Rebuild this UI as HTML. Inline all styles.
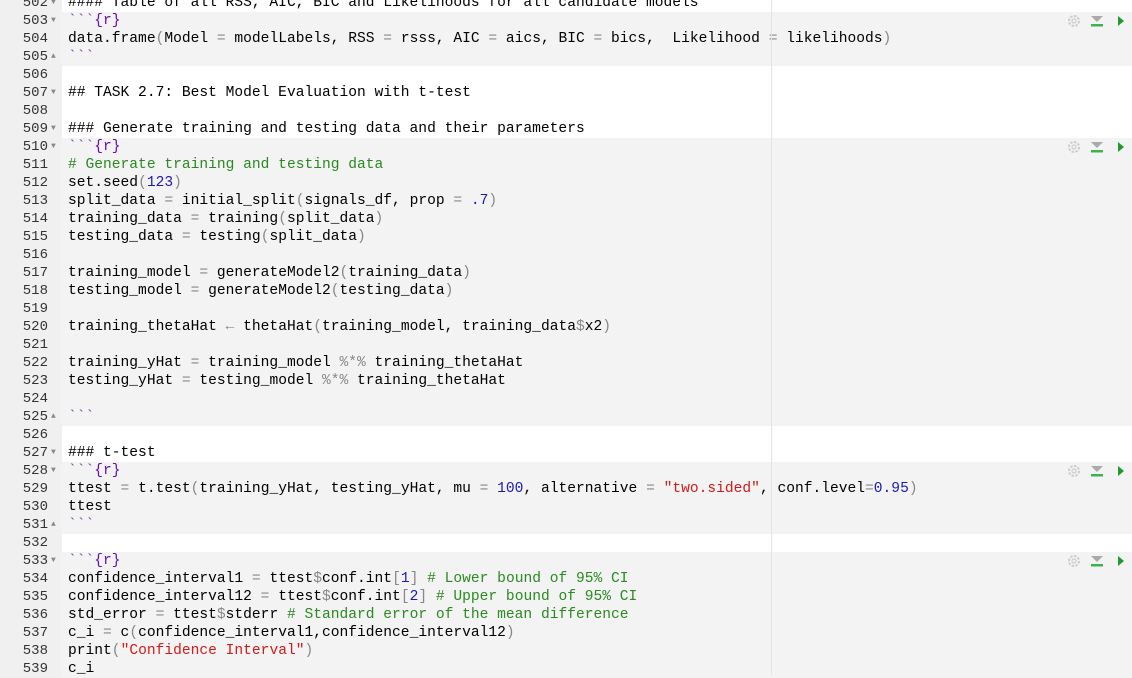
<!DOCTYPE html>
<html><head><style>
body{margin:0;width:1132px;height:675px;overflow:hidden;background:#fff;font-family:"Liberation Mono",monospace;font-size:14.6px;position:relative}
.g{position:absolute;left:0;top:0;width:62px;height:675px;background:#f0f0f0;}
#w{position:absolute;left:0;top:-6px;width:1132px}
.l{position:relative;height:18px;line-height:18px;white-space:pre;padding-left:68px;color:#000}
.l.c{background:linear-gradient(to right,#f0f0f0 62px,#f3f3f3 62px)}
.l b{font-weight:normal;position:absolute;left:0;width:48px;text-align:right;color:#333;font-size:14px}
.l i{font-style:normal;position:absolute;left:51px;color:#888;font-size:8px}
.p{color:#888}.n{color:#1a1ab8}.s{color:#d21a1a}.cm{color:#2a8a20}.r{color:#6a0dad}.bt{color:#7a3aa8}
.vl{position:absolute;left:771px;top:0;width:1px;height:675px;background:#e3e3e3}
.ic{position:absolute;left:1066px;width:66px;height:18px}
</style></head><body>
<div class="g"></div>
<div id="w">
<div class="l"><b>502</b><i>&#9660;</i>#### Table of all RSS, AIC, BIC and Likelihoods for all candidate models</div>
<div class="l c"><b>503</b><i>&#9660;</i><span class="bt">&#96;&#96;&#96;</span><span class="r">{r}</span></div>
<div class="l c"><b>504</b>data.frame<span class="p">(</span>Model <span class="p">=</span> modelLabels, RSS <span class="p">=</span> rsss, AIC <span class="p">=</span> aics, BIC <span class="p">=</span> bics,  Likelihood <span class="p">=</span> likelihoods<span class="p">)</span></div>
<div class="l c"><b>505</b><i>&#9650;</i><span class="bt">&#96;&#96;&#96;</span></div>
<div class="l"><b>506</b></div>
<div class="l"><b>507</b><i>&#9660;</i>## TASK 2.7: Best Model Evaluation with t-test</div>
<div class="l"><b>508</b></div>
<div class="l"><b>509</b><i>&#9660;</i>### Generate training and testing data and their parameters</div>
<div class="l c"><b>510</b><i>&#9660;</i><span class="bt">&#96;&#96;&#96;</span><span class="r">{r}</span></div>
<div class="l c"><b>511</b><span class="cm"># Generate training and testing data</span></div>
<div class="l c"><b>512</b>set.seed<span class="p">(</span><span class="n">123</span><span class="p">)</span></div>
<div class="l c"><b>513</b>split_data <span class="p">=</span> initial_split<span class="p">(</span>signals_df, prop <span class="p">=</span> <span class="n">.7</span><span class="p">)</span></div>
<div class="l c"><b>514</b>training_data <span class="p">=</span> training<span class="p">(</span>split_data<span class="p">)</span></div>
<div class="l c"><b>515</b>testing_data <span class="p">=</span> testing<span class="p">(</span>split_data<span class="p">)</span></div>
<div class="l c"><b>516</b></div>
<div class="l c"><b>517</b>training_model <span class="p">=</span> generateModel2<span class="p">(</span>training_data<span class="p">)</span></div>
<div class="l c"><b>518</b>testing_model <span class="p">=</span> generateModel2<span class="p">(</span>testing_data<span class="p">)</span></div>
<div class="l c"><b>519</b></div>
<div class="l c"><b>520</b>training_thetaHat <span class="p">&larr;</span> thetaHat<span class="p">(</span>training_model, training_data<span class="p">$</span>x2<span class="p">)</span></div>
<div class="l c"><b>521</b></div>
<div class="l c"><b>522</b>training_yHat <span class="p">=</span> training_model <span class="p">%*%</span> training_thetaHat</div>
<div class="l c"><b>523</b>testing_yHat <span class="p">=</span> testing_model <span class="p">%*%</span> training_thetaHat</div>
<div class="l c"><b>524</b></div>
<div class="l c"><b>525</b><i>&#9650;</i><span class="bt">&#96;&#96;&#96;</span></div>
<div class="l"><b>526</b></div>
<div class="l"><b>527</b><i>&#9660;</i>### t-test</div>
<div class="l c"><b>528</b><i>&#9660;</i><span class="bt">&#96;&#96;&#96;</span><span class="r">{r}</span></div>
<div class="l c"><b>529</b>ttest <span class="p">=</span> t.test<span class="p">(</span>training_yHat, testing_yHat, mu <span class="p">=</span> <span class="n">100</span>, alternative <span class="p">=</span> <span class="s">"two.sided"</span>, conf.level<span class="p">=</span><span class="n">0.95</span><span class="p">)</span></div>
<div class="l c"><b>530</b>ttest</div>
<div class="l c"><b>531</b><i>&#9650;</i><span class="bt">&#96;&#96;&#96;</span></div>
<div class="l"><b>532</b></div>
<div class="l c"><b>533</b><i>&#9660;</i><span class="bt">&#96;&#96;&#96;</span><span class="r">{r}</span></div>
<div class="l c"><b>534</b>confidence_interval1 <span class="p">=</span> ttest<span class="p">$</span>conf.int<span class="p">[</span><span class="n">1</span><span class="p">]</span> <span class="cm"># Lower bound of 95% CI</span></div>
<div class="l c"><b>535</b>confidence_interval12 <span class="p">=</span> ttest<span class="p">$</span>conf.int<span class="p">[</span><span class="n">2</span><span class="p">]</span> <span class="cm"># Upper bound of 95% CI</span></div>
<div class="l c"><b>536</b>std_error <span class="p">=</span> ttest<span class="p">$</span>stderr <span class="cm"># Standard error of the mean difference</span></div>
<div class="l c"><b>537</b>c_i <span class="p">=</span> c<span class="p">(</span>confidence_interval1,confidence_interval12<span class="p">)</span></div>
<div class="l c"><b>538</b>print<span class="p">(</span><span class="s">"Confidence Interval"</span><span class="p">)</span></div>
<div class="l c"><b>539</b>c_i</div>
</div>
<div class="vl"></div>
<svg class="ic" style="top:12px" viewBox="0 0 66 18"><circle cx="8" cy="9" r="5" fill="none" stroke="#ccc" stroke-width="2" stroke-dasharray="2.5 1.4"/><circle cx="8" cy="9" r="2" fill="none" stroke="#ccc" stroke-width="1.2"/><path d="M25 4h12l-6 6z" fill="#aaa"/><rect x="25" y="12" width="12" height="2.5" fill="#3cb44b"/><path d="M52 4l6 5-6 5z" fill="#1e9a2e"/></svg>
<svg class="ic" style="top:138px" viewBox="0 0 66 18"><circle cx="8" cy="9" r="5" fill="none" stroke="#ccc" stroke-width="2" stroke-dasharray="2.5 1.4"/><circle cx="8" cy="9" r="2" fill="none" stroke="#ccc" stroke-width="1.2"/><path d="M25 4h12l-6 6z" fill="#aaa"/><rect x="25" y="12" width="12" height="2.5" fill="#3cb44b"/><path d="M52 4l6 5-6 5z" fill="#1e9a2e"/></svg>
<svg class="ic" style="top:462px" viewBox="0 0 66 18"><circle cx="8" cy="9" r="5" fill="none" stroke="#ccc" stroke-width="2" stroke-dasharray="2.5 1.4"/><circle cx="8" cy="9" r="2" fill="none" stroke="#ccc" stroke-width="1.2"/><path d="M25 4h12l-6 6z" fill="#aaa"/><rect x="25" y="12" width="12" height="2.5" fill="#3cb44b"/><path d="M52 4l6 5-6 5z" fill="#1e9a2e"/></svg>
<svg class="ic" style="top:552px" viewBox="0 0 66 18"><circle cx="8" cy="9" r="5" fill="none" stroke="#ccc" stroke-width="2" stroke-dasharray="2.5 1.4"/><circle cx="8" cy="9" r="2" fill="none" stroke="#ccc" stroke-width="1.2"/><path d="M25 4h12l-6 6z" fill="#aaa"/><rect x="25" y="12" width="12" height="2.5" fill="#3cb44b"/><path d="M52 4l6 5-6 5z" fill="#1e9a2e"/></svg>
</body></html>
